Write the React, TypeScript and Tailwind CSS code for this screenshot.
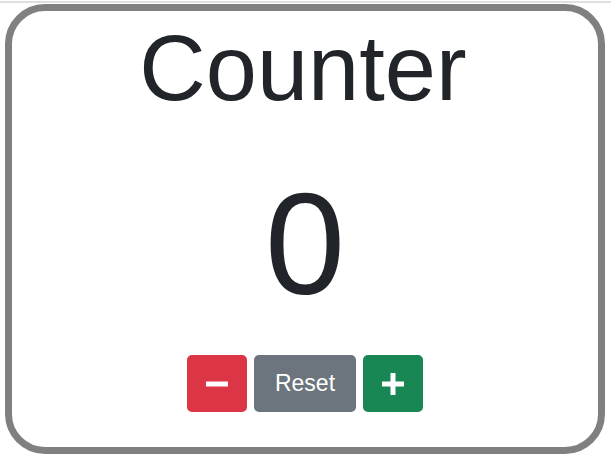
export default function App() {
  return (
    <div className="w-[611px] h-[461px] bg-white pt-[1px]" style={{ fontFamily: '"Liberation Sans", Arial, sans-serif' }}>
      <div className="h-[2px] bg-[#e0e0e0]" />
      <div className="ml-[5px] w-[600px] mt-[1px] h-[450px] border-[7px] border-[#808080] rounded-[40px] flex flex-col items-center pt-[11px] text-[#212529]">
        <h1 className="text-[92px] leading-none m-0 -ml-[4px]">Counter</h1>
        <div className="text-[144px] leading-none mt-[59px]">0</div>
        <div className="flex gap-[7px] mt-[38px]">
          <button className="w-[60px] h-[57px] rounded-[5px] bg-[#dc3545] flex items-center justify-center">
            <svg width="22" height="22" viewBox="0 0 22 22">
              <rect x="0" y="8.5" width="22" height="5" fill="white" rx="0.5" />
            </svg>
          </button>
          <button className="w-[102px] h-[57px] rounded-[5px] bg-[#6c757d] text-white text-[23px] flex items-center justify-center">
            Reset
          </button>
          <button className="w-[60px] h-[57px] rounded-[5px] bg-[#198754] flex items-center justify-center">
            <svg width="22" height="22" viewBox="0 0 22 22">
              <rect x="0" y="8.5" width="22" height="5" fill="white" rx="0.5" />
              <rect x="8.5" y="0" width="5" height="22" fill="white" rx="0.5" />
            </svg>
          </button>
        </div>
      </div>
    </div>
  );
}
